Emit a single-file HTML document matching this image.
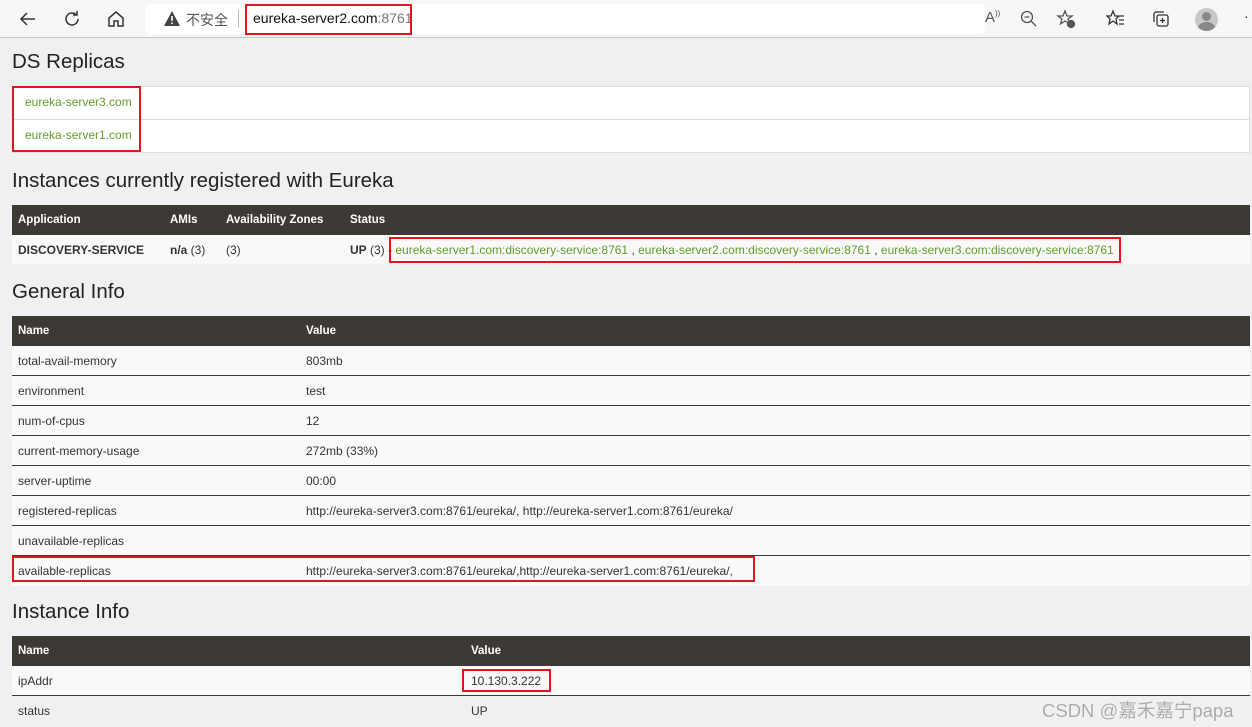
<!DOCTYPE html>
<html><head><meta charset="utf-8"><style>
*{margin:0;padding:0;box-sizing:border-box}
body{width:1252px;height:727px;overflow:hidden;background:#f0f0f0;font-family:"Liberation Sans","Noto Sans CJK SC",sans-serif;color:#333;position:relative;font-size:12px}
.abs{position:absolute}
.bar{left:0;top:0;width:1252px;height:38px;background:#f7f7f7;border-bottom:1px solid #c8c8c8}
.addr{left:145px;top:4px;width:840px;height:30px;background:#fff;border-radius:5px}
h2{position:absolute;left:12px;font-weight:normal;font-size:20.5px;color:#222}
.tbl{position:absolute;left:12px;width:1238px}
.hd{height:30px;background:#3d3934;color:#fff;font-weight:bold;position:relative;font-size:11.5px}
.row{height:30px;background:#f9f9f9;border-bottom:1px solid #3d3934;position:relative}
.c{position:absolute;top:0;line-height:31px;white-space:nowrap}
.g{color:#5f9d29}
.red{position:absolute;border:2px solid #e3141d}
.ic{position:absolute;top:9px;width:20px;height:20px}
</style></head><body>
<div class="abs bar"></div>
<svg class="ic" style="left:18px" viewBox="0 0 20 20" fill="none" stroke="#333" stroke-width="1.5"><path d="M17 10H3M9 4L3 10l6 6"/></svg>
<svg class="ic" style="left:62px" viewBox="0 0 20 20" fill="none" stroke="#333" stroke-width="1.5"><path d="M16 10a6 6 0 1 1-2-4.5M15 2v4h-4"/></svg>
<svg class="ic" style="left:106px" viewBox="0 0 20 20" fill="none" stroke="#333" stroke-width="1.5"><path d="M3 9l7-6 7 6v8h-5v-5h-4v5H3z"/></svg>
<div class="abs addr"></div>
<svg class="abs" style="left:164px;top:11px" width="16" height="15" viewBox="0 0 16 15"><path d="M8 0L16 15H0z" fill="#444"/><rect x="7.2" y="5" width="1.6" height="5" fill="#fff"/><rect x="7.2" y="11.5" width="1.6" height="1.6" fill="#fff"/></svg>
<div class="abs" style="left:186px;top:10px;font-size:14px;color:#555">不安全</div>
<div class="abs" style="left:238px;top:10px;width:1px;height:18px;background:#bbb"></div>
<div class="abs" style="left:253px;top:10px;font-size:14px;color:#111">eureka-server2.com<span style="color:#777">:8761</span></div>
<div class="red" style="left:245px;top:4px;width:167px;height:31px"></div>
<div class="abs" style="left:985px;top:9px;font-size:15px;color:#555">A<sup style="font-size:8px">))</sup></div>
<svg class="ic" style="left:1019px" viewBox="0 0 20 20" fill="none" stroke="#555" stroke-width="1.3"><circle cx="8" cy="8" r="5.5"/><path d="M5.5 8h5M12 12l5 5"/></svg>
<svg class="ic" style="left:1056px" viewBox="0 0 20 20" fill="none" stroke="#555" stroke-width="1.3"><path d="M9 2l2 5h5l-4 3 1.5 5L9 12l-4.5 3L6 10 2 7h5z"/><circle cx="15" cy="15" r="3.5" fill="#555"/></svg>
<svg class="ic" style="left:1106px" viewBox="0 0 20 20" fill="none" stroke="#333" stroke-width="1.3"><path d="M7 2l2 5h4l-3 3 1 5-4-3-4 3 1-5-3-3h4zM13 7h5M13 11h5M13 15h5"/></svg>
<svg class="ic" style="left:1151px" viewBox="0 0 20 20" fill="none" stroke="#333" stroke-width="1.3"><rect x="6" y="6" width="11" height="11" rx="2"/><path d="M3 13V5a2 2 0 0 1 2-2h8M11.5 9v5M9 11.5h5"/></svg>
<div class="abs" style="left:1195px;top:8px;width:23px;height:23px;border-radius:50%;background:#c8c8c8;overflow:hidden"><div class="abs" style="left:7px;top:4px;width:9px;height:9px;border-radius:50%;background:#888"></div><div class="abs" style="left:3px;top:14px;width:17px;height:12px;border-radius:50%;background:#888"></div></div>
<div class="abs" style="left:1244px;top:8px;font-size:14px;color:#333">·</div>

<h2 style="top:50px">DS Replicas</h2>
<div class="abs" style="left:12px;top:86px;width:1238px;height:67px;background:#fff;border:1px solid #ddd"></div>
<div class="abs" style="left:12px;top:119px;width:1238px;height:1px;background:#ddd"></div>
<div class="abs g" style="left:25px;top:95px">eureka-server3.com</div>
<div class="abs g" style="left:25px;top:128px">eureka-server1.com</div>
<div class="red" style="left:12px;top:86px;width:129px;height:66px"></div>

<h2 style="top:169px">Instances currently registered with Eureka</h2>
<div class="tbl" style="top:205px">
<div class="hd"><span class="c" style="left:6px">Application</span><span class="c" style="left:158px">AMIs</span><span class="c" style="left:214px">Availability Zones</span><span class="c" style="left:338px">Status</span></div>
<div class="row" style="border:none;height:29px"><span class="c" style="left:6px;font-weight:bold">DISCOVERY-SERVICE</span><span class="c" style="left:158px"><b>n/a</b> (3)</span><span class="c" style="left:214px">(3)</span><span class="c" style="left:338px"><b>UP</b> (3) - <span class="g">eureka-server1.com:discovery-service:8761</span> , <span class="g">eureka-server2.com:discovery-service:8761</span> , <span class="g">eureka-server3.com:discovery-service:8761</span></span></div>
</div>
<div class="red" style="left:389px;top:237px;width:732px;height:26px"></div>

<h2 style="top:280px">General Info</h2>
<div class="tbl" style="top:316px">
<div class="hd"><span class="c" style="left:6px">Name</span><span class="c" style="left:294px">Value</span></div>
<div class="row"><span class="c" style="left:6px">total-avail-memory</span><span class="c" style="left:294px">803mb</span></div>
<div class="row"><span class="c" style="left:6px">environment</span><span class="c" style="left:294px">test</span></div>
<div class="row"><span class="c" style="left:6px">num-of-cpus</span><span class="c" style="left:294px">12</span></div>
<div class="row"><span class="c" style="left:6px">current-memory-usage</span><span class="c" style="left:294px">272mb (33%)</span></div>
<div class="row"><span class="c" style="left:6px">server-uptime</span><span class="c" style="left:294px">00:00</span></div>
<div class="row"><span class="c" style="left:6px">registered-replicas</span><span class="c" style="left:294px">http://eureka-server3.com:8761/eureka/, http://eureka-server1.com:8761/eureka/</span></div>
<div class="row"><span class="c" style="left:6px">unavailable-replicas</span></div>
<div class="row" style="border:none"><span class="c" style="left:6px">available-replicas</span><span class="c" style="left:294px">http://eureka-server3.com:8761/eureka/,http://eureka-server1.com:8761/eureka/,</span></div>
</div>
<div class="red" style="left:12px;top:556px;width:743px;height:26px"></div>

<h2 style="top:600px">Instance Info</h2>
<div class="tbl" style="top:636px">
<div class="hd"><span class="c" style="left:6px">Name</span><span class="c" style="left:459px">Value</span></div>
<div class="row"><span class="c" style="left:6px">ipAddr</span><span class="c" style="left:459px">10.130.3.222</span></div>
<div class="row" style="background:transparent;border:none"><span class="c" style="left:6px">status</span><span class="c" style="left:459px">UP</span></div>
</div>
<div class="red" style="left:462px;top:669px;width:89px;height:23px"></div>
<div class="abs" style="left:1042px;top:697px;font-size:18.5px;color:#aaa;text-shadow:0 0 1px #fff">CSDN @嘉禾嘉宁papa</div>
</body></html>
